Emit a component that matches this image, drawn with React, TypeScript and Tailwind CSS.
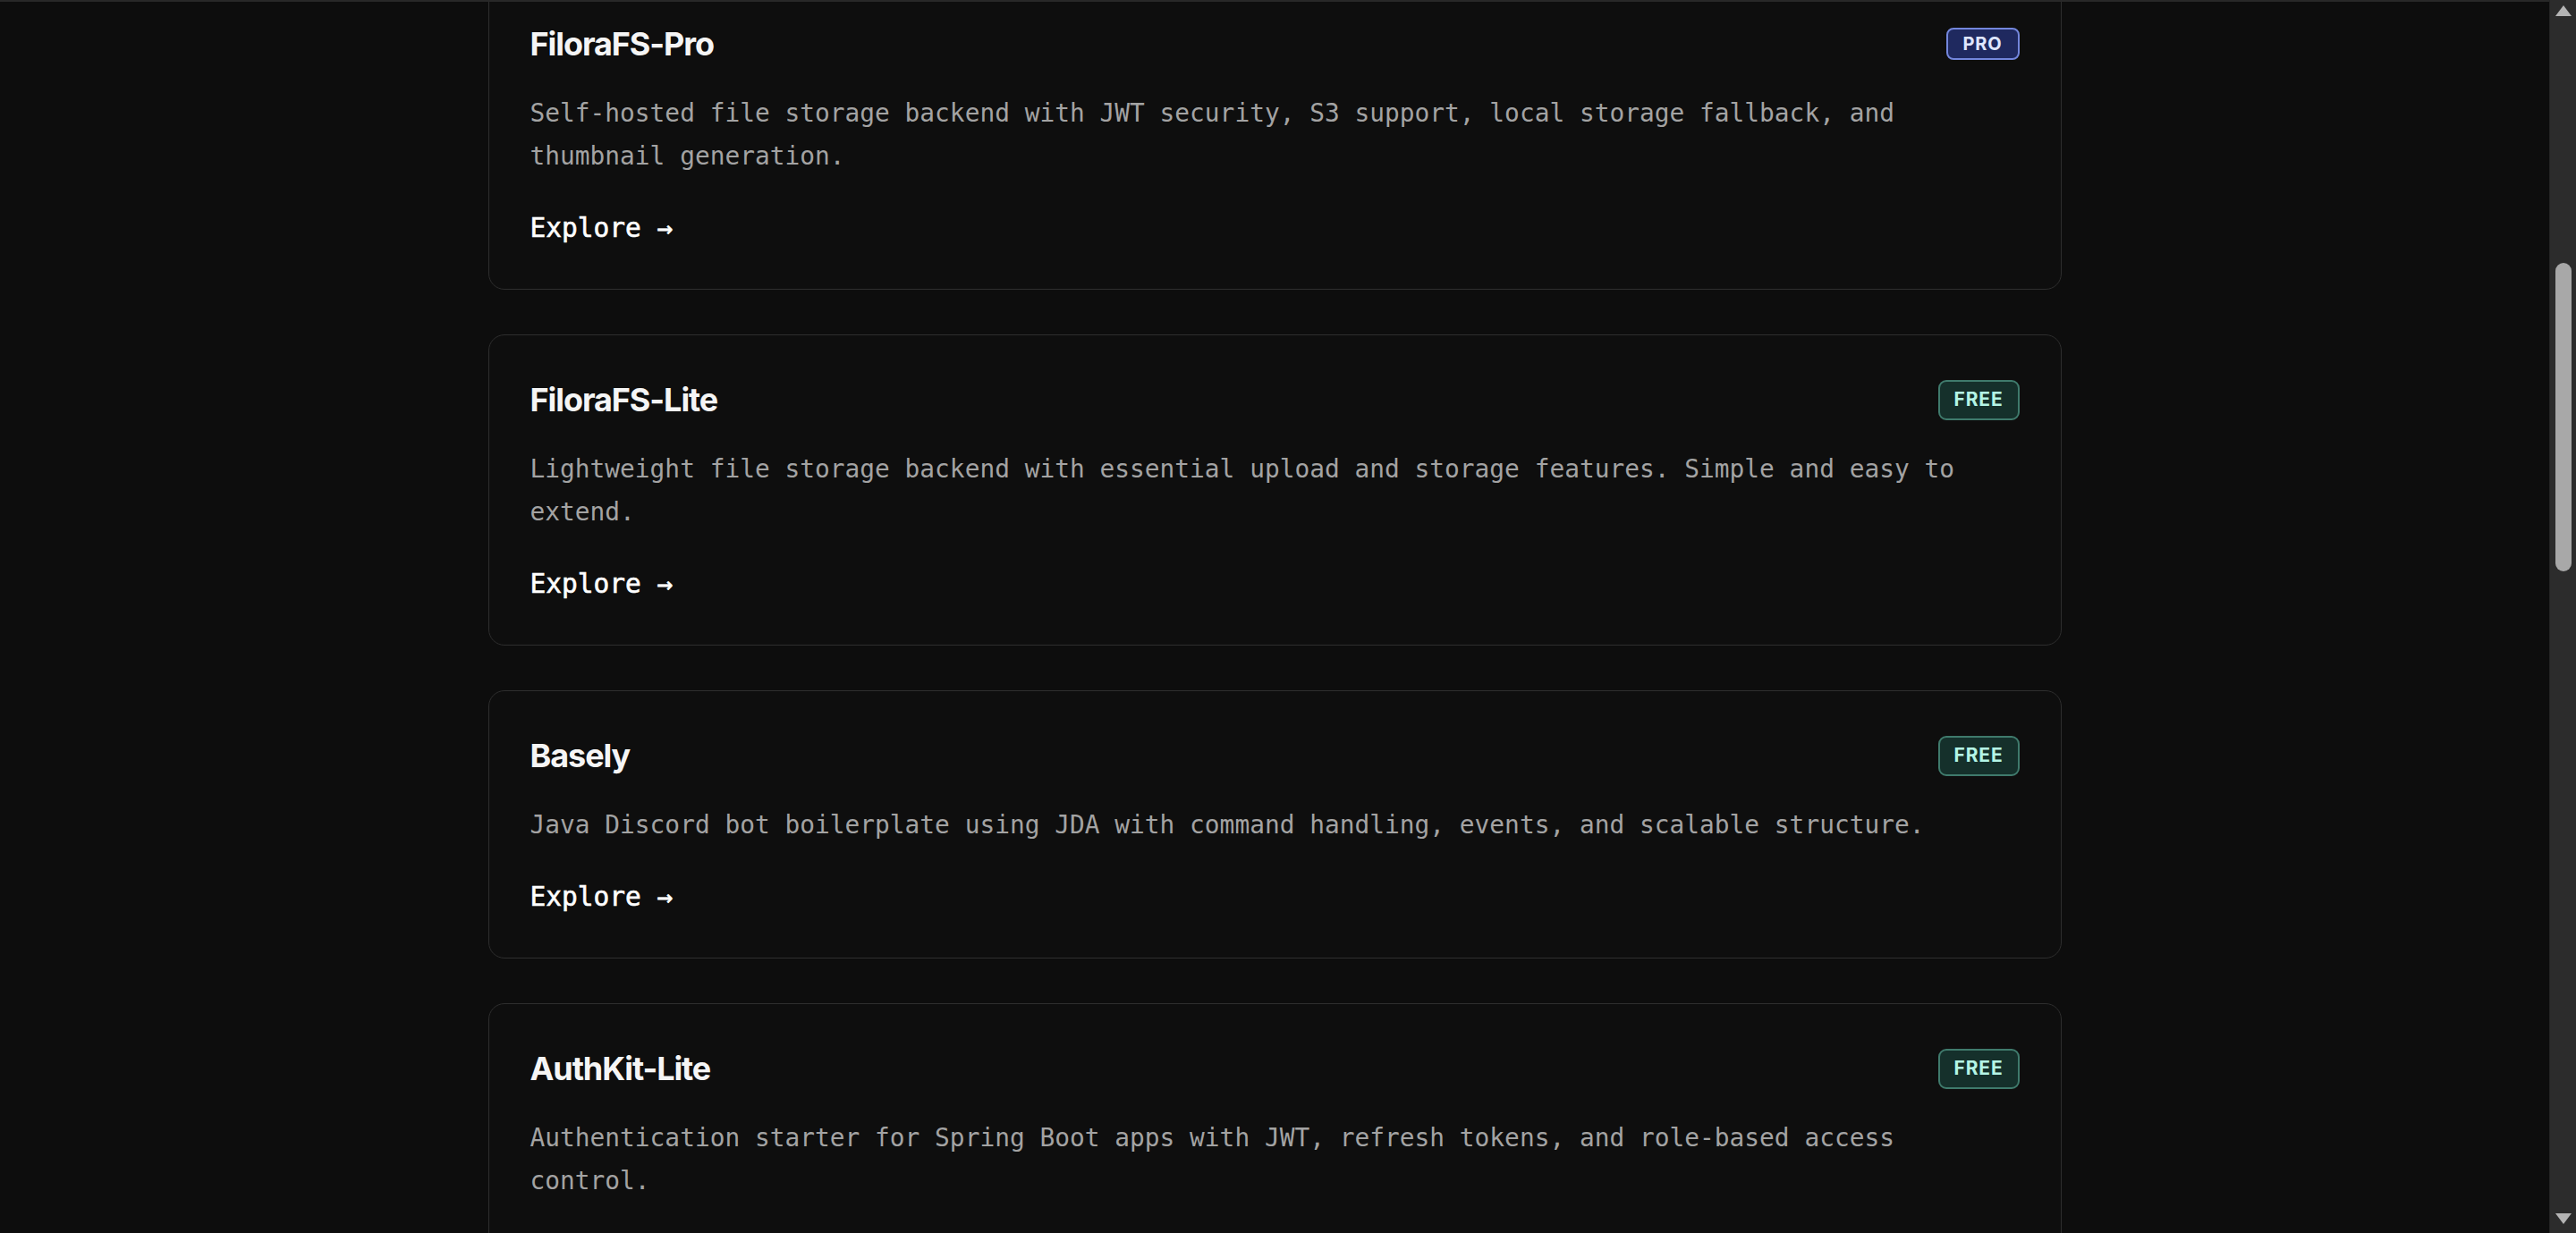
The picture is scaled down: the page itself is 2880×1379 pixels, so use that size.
import React from "react";

type Project = {
  name: string;
  description: string;
  tier: "PRO" | "FREE";
};

const projects: Project[] = [
  {
    name: "FiloraFS-Pro",
    description:
      "Self-hosted file storage backend with JWT security, S3 support, local storage fallback, and thumbnail generation.",
    tier: "PRO",
  },
  {
    name: "FiloraFS-Lite",
    description:
      "Lightweight file storage backend with essential upload and storage features. Simple and easy to extend.",
    tier: "FREE",
  },
  {
    name: "Basely",
    description:
      "Java Discord bot boilerplate using JDA with command handling, events, and scalable structure.",
    tier: "FREE",
  },
  {
    name: "AuthKit-Lite",
    description:
      "Authentication starter for Spring Boot apps with JWT, refresh tokens, and role-based access control.",
    tier: "FREE",
  },
];

function TierBadge({ tier }: { tier: Project["tier"] }) {
  if (tier === "PRO") {
    return (
      <span className="inline-flex h-[36px] items-center rounded-[8px] border-2 border-[#7386dc] bg-[#1f295f] px-[17px] text-[20px] font-bold tracking-[0.04em] text-[#dfe6ff] [font-family:Inter,'Noto_Sans',sans-serif]">
        PRO
      </span>
    );
  }
  return (
    <span className="inline-flex h-[45px] items-center rounded-[9px] border-2 border-[#3f7a6c] bg-[#15302b] px-[16px] text-[21px] font-bold tracking-[0.04em] text-[#b4f5e6] [font-family:Inter,'Noto_Sans',sans-serif]">
      FREE
    </span>
  );
}

function ProjectCard({ project }: { project: Project }) {
  return (
    <div className="w-[1759px] rounded-[18px] border border-[#2e2e2e] bg-[#0e0e0e] px-[46px] pt-[45px] pb-[46px]">
      {/* Header */}
      <div className="flex h-[54px] items-center justify-between">
        <h3 className="text-[36px] leading-[54px] font-bold tracking-[-0.03em] text-[#f5f5f5] [font-family:Inter,'Noto_Sans',sans-serif]">
          {project.name}
        </h3>
        <TierBadge tier={project.tier} />
      </div>

      <p className="mt-[27px] text-[27.85px] leading-[48px] text-[#a3a3a3] [font-family:'DejaVu_Sans_Mono','Liberation_Mono',monospace]">
        {project.description}
      </p>

      <a
        href="#"
        className="mt-[34px] block text-[29.5px] leading-[44px] text-white [-webkit-text-stroke:0.6px_white] [font-family:'DejaVu_Sans_Mono','Liberation_Mono',monospace]"
      >
        Explore →
      </a>
    </div>
  );
}

function Scrollbar() {
  return (
    <div className="flex h-full w-[30px] flex-col items-center border-l border-[#242424] bg-[#2c2c2c]">
      <svg width="20" height="14" viewBox="0 0 20 14" className="mt-[5px] shrink-0">
        <path d="M10 1 L19 13 L1 13 Z" fill="#b4b4b4" />
      </svg>
      <div className="mt-[275px] h-[345px] w-[18px] shrink-0 rounded-full bg-[#a8a8a8]" />
      <div className="flex-1" />
      <svg width="20" height="14" viewBox="0 0 20 14" className="mb-[9px] shrink-0">
        <path d="M1 1 L19 1 L10 13 Z" fill="#b4b4b4" />
      </svg>
    </div>
  );
}

export default function App() {
  return (
    <div className="flex h-screen w-full overflow-hidden bg-[#0d0d0d]">
      <main className="flex-1 overflow-hidden border-t-2 border-[#282828]">
        <div className="-mt-[26px] flex flex-col items-center gap-[50px]">
          {projects.map((p) => (
            <ProjectCard key={p.name} project={p} />
          ))}
        </div>
      </main>
      <Scrollbar />
    </div>
  );
}
